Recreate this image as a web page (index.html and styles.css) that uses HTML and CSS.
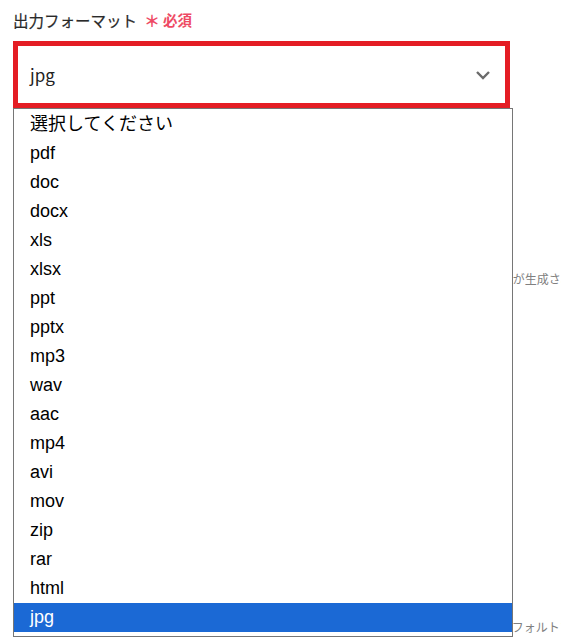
FILE: index.html
```html
<!DOCTYPE html>
<html lang="ja">
<head>
<meta charset="utf-8">
<link rel="stylesheet" href="styles.css">
</head>
<body>
<div class="page">
  <div class="field">
    <div class="label">出力フォーマット<span class="req"><span class="ast">＊</span>必須</span></div>
    <div class="select-wrap">
      <div class="select">
        <span class="value">jpg</span>
        <svg class="chev" width="16" height="10" viewBox="0 0 16 10"><polyline points="2,2 8,8 14,2" fill="none" stroke="#6b6b6b" stroke-width="2.4"/></svg>
      </div>
      <ul class="options">
        <li>選択してください</li>
        <li>pdf</li>
        <li>doc</li>
        <li>docx</li>
        <li>xls</li>
        <li>xlsx</li>
        <li>ppt</li>
        <li>pptx</li>
        <li>mp3</li>
        <li>wav</li>
        <li>aac</li>
        <li>mp4</li>
        <li>avi</li>
        <li>mov</li>
        <li>zip</li>
        <li>rar</li>
        <li>html</li>
        <li class="sel">jpg</li>
      </ul>
    </div>
    <p class="hint hint1">未入力の場合は元のファイル名と出力フォーマットをもとに自動で新しいファイル名が生成されます。</p>
    <p class="hint hint2">出力フォーマットを選択しない場合は、アップロードした元のファイルの拡張子が、デフォルトファイル形式として使われます。</p>
  </div>
</div>
</body>
</html>
```
FILE: styles.css
```css
* { box-sizing: border-box; }
html, body { margin: 0; padding: 0; background: #fff; overflow: hidden; }
body { font-family: "Noto Sans CJK JP", "Noto Sans", sans-serif; }
.page { padding: 8px 0 0 13px; width: 561px; height: 637px; overflow: hidden; }
.label {
  font-size: 15.5px;
  line-height: 24px;
  color: #2a2a2a;
  display: flex;
  align-items: center;
  -webkit-text-stroke: 0.2px #2a2a2a;
}
.req {
  color: #ee4a64;
  font-size: 14.5px;
  margin-left: 7px;
  display: flex;
  align-items: center;
  font-weight: 700;
  -webkit-text-stroke: 0;
}
.ast { font-size: 16px; margin-right: 3px; font-weight: 700; }
.select-wrap { position: relative; margin-top: 9px; width: 499px; }
.select {
  height: 67px;
  width: 497px;
  border: 5px solid #e41d24;
  display: flex;
  align-items: center;
  padding: 0 12px 0 12px;
  background: #fff;
  position: relative;
}
.select::after {
  content: "";
  position: absolute;
  top: -5px; right: -8px; bottom: -5px; left: -5px;
  border: 1px solid #d6d6d6;
  border-radius: 6px;
  pointer-events: none;
  z-index: -1;
}
.value { font-size: 17px; color: #222; flex: 1; }
.chev { display: block; margin-right: 2px; }
.options {
  position: absolute;
  top: 67px;
  left: 0;
  width: 500px;
  margin: 0;
  padding: 1px 0 4px;
  list-style: none;
  background: #fff;
  border: 1px solid #767676;
  z-index: 2;
  font-family: "Liberation Sans", "Noto Sans CJK JP", sans-serif;
  font-size: 18px;
  color: #000;
}
.options li { height: 29px; line-height: 29px; padding-left: 16px; }
.options li.sel { background: #1b69d5; color: #fff; }
.hint {
  margin: 0;
  font-size: 12px;
  line-height: 18px;
  color: #808080;
  white-space: nowrap;
  padding-left: 44px;
}
.hint1 { margin-top: 162px; }
.hint2 { margin-top: 330px; padding-left: 31px; }
```
